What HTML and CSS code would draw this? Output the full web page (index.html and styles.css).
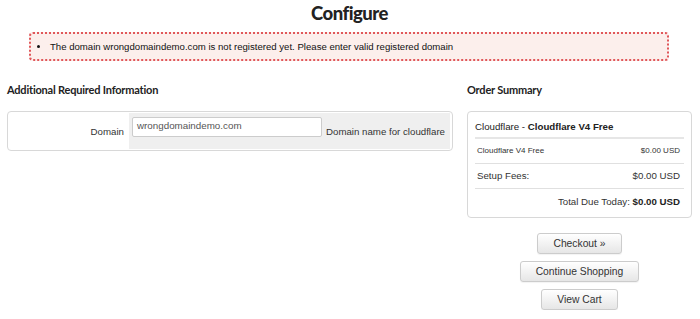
FILE: index.html
```html
<!DOCTYPE html>
<html>
<head>
<meta charset="utf-8">
<link rel="stylesheet" href="styles.css">
</head>
<body>
<h1 class="title">Configure</h1>
<div class="alert">
  <ul class="alert-list">
    <li>The domain wrongdomaindemo.com is not registered yet. Please enter valid registered domain</li>
  </ul>
</div>
<div class="columns">
  <div class="col-main">
    <h2 class="section-title">Additional Required Information</h2>
    <div class="panel fields">
      <div class="field-label">Domain</div>
      <div class="field-body">
        <div class="input">wrongdomaindemo.com</div>
        <span class="field-help">Domain name for cloudflare</span>
      </div>
    </div>
  </div>
  <div class="col-side">
    <h2 class="section-title">Order Summary</h2>
    <div class="panel summary">
      <div class="sum-product">Cloudflare - <b>Cloudflare V4 Free</b></div>
      <div class="sum-row small"><span>Cloudflare V4 Free</span><span>$0.00 USD</span></div>
      <div class="sum-row"><span>Setup Fees:</span><span>$0.00 USD</span></div>
      <div class="sum-total">Total Due Today: <b>$0.00 USD</b></div>
    </div>
    <div class="actions">
      <button class="btn">Checkout »</button>
      <button class="btn">Continue Shopping</button>
      <button class="btn">View Cart</button>
    </div>
  </div>
</div>
</body>
</html>
```
FILE: styles.css
```css
* { box-sizing: border-box; }
body {
  margin: 0;
  padding: 0 8px 0 7px;
  font-family: "Liberation Sans", Arial, sans-serif;
  font-size: 9.7px;
  color: #333;
  background: #fff;
}
.title {
  margin: 0;
  padding-top: 1px;
  height: 32px;
  text-align: center;
  font-family: Lato, sans-serif;
  font-weight: 900;
  font-size: 18.5px;
  letter-spacing: -0.5px;
  line-height: 24px;
  color: #222;
}
.alert {
  margin: 0 23px 0 22px;
  height: 29px;
  background: #fcefec;
  border: 2px dotted #e0575a;
  border-radius: 4px;
  display: flex;
  align-items: center;
}
.alert-list {
  margin: 0;
  padding-left: 19px;
  font-size: 9.6px;
  color: #111;
}
.columns {
  display: flex;
  gap: 14px;
  margin-top: 19px;
}
.col-main { flex: 0 0 446px; }
.col-side { flex: 1; }
.section-title {
  margin: 0 0 11px;
  font-family: Lato, sans-serif;
  font-weight: 700;
  font-size: 11px;
  letter-spacing: -0.2px;
  line-height: 20px;
  color: #222;
}
.panel {
  border: 1px solid #d8d8d8;
  border-radius: 4px;
  background: #fff;
}
.fields {
  display: flex;
  height: 40px;
  padding: 1px 2px 1px 0;
}
.field-label {
  width: 121px;
  padding-right: 5px;
  text-align: right;
  line-height: 37px;
}
.field-body {
  flex: 1;
  background: #efefef;
  display: flex;
  align-items: flex-start;
  padding: 4px 0 0 3px;
}
.input {
  width: 190px;
  height: 20px;
  border: 1px solid #ccc;
  border-radius: 2px;
  background: #fff;
  padding: 2px 4px;
  color: #555;
  line-height: 12px;
  font-size: 9.8px;
}
.field-help {
  margin-left: 4px;
  line-height: 29px;
  white-space: nowrap;
}
.summary {
  padding: 7px 7px 9px;
  height: 107px;
}
.sum-product {
  color: #222;
  line-height: 15px;
  padding-bottom: 3px;
  border-bottom: 2px solid #e6e6e6;
}
.sum-row {
  display: flex;
  justify-content: space-between;
  padding: 0 4px 0 2px;
  height: 25px;
  line-height: 24px;
  border-bottom: 1px solid #e0e0e0;
}
.sum-row.small { font-size: 8px; }
.sum-total {
  text-align: right;
  padding-right: 4px;
  line-height: 26px;
}
.sum-total b { color: #222; }
.actions {
  display: flex;
  flex-direction: column;
  align-items: center;
  gap: 7px;
  margin-top: 15px;
}
.btn {
  font-family: "Liberation Sans", Arial, sans-serif;
  font-size: 10.3px;
  color: #333;
  height: 21px;
  padding: 0 15px;
  border: 1px solid #ccc;
  border-radius: 3px;
  background: linear-gradient(#fff, #e6e6e6);
  box-shadow: 0 1px 1px rgba(0,0,0,0.05);
}
```
